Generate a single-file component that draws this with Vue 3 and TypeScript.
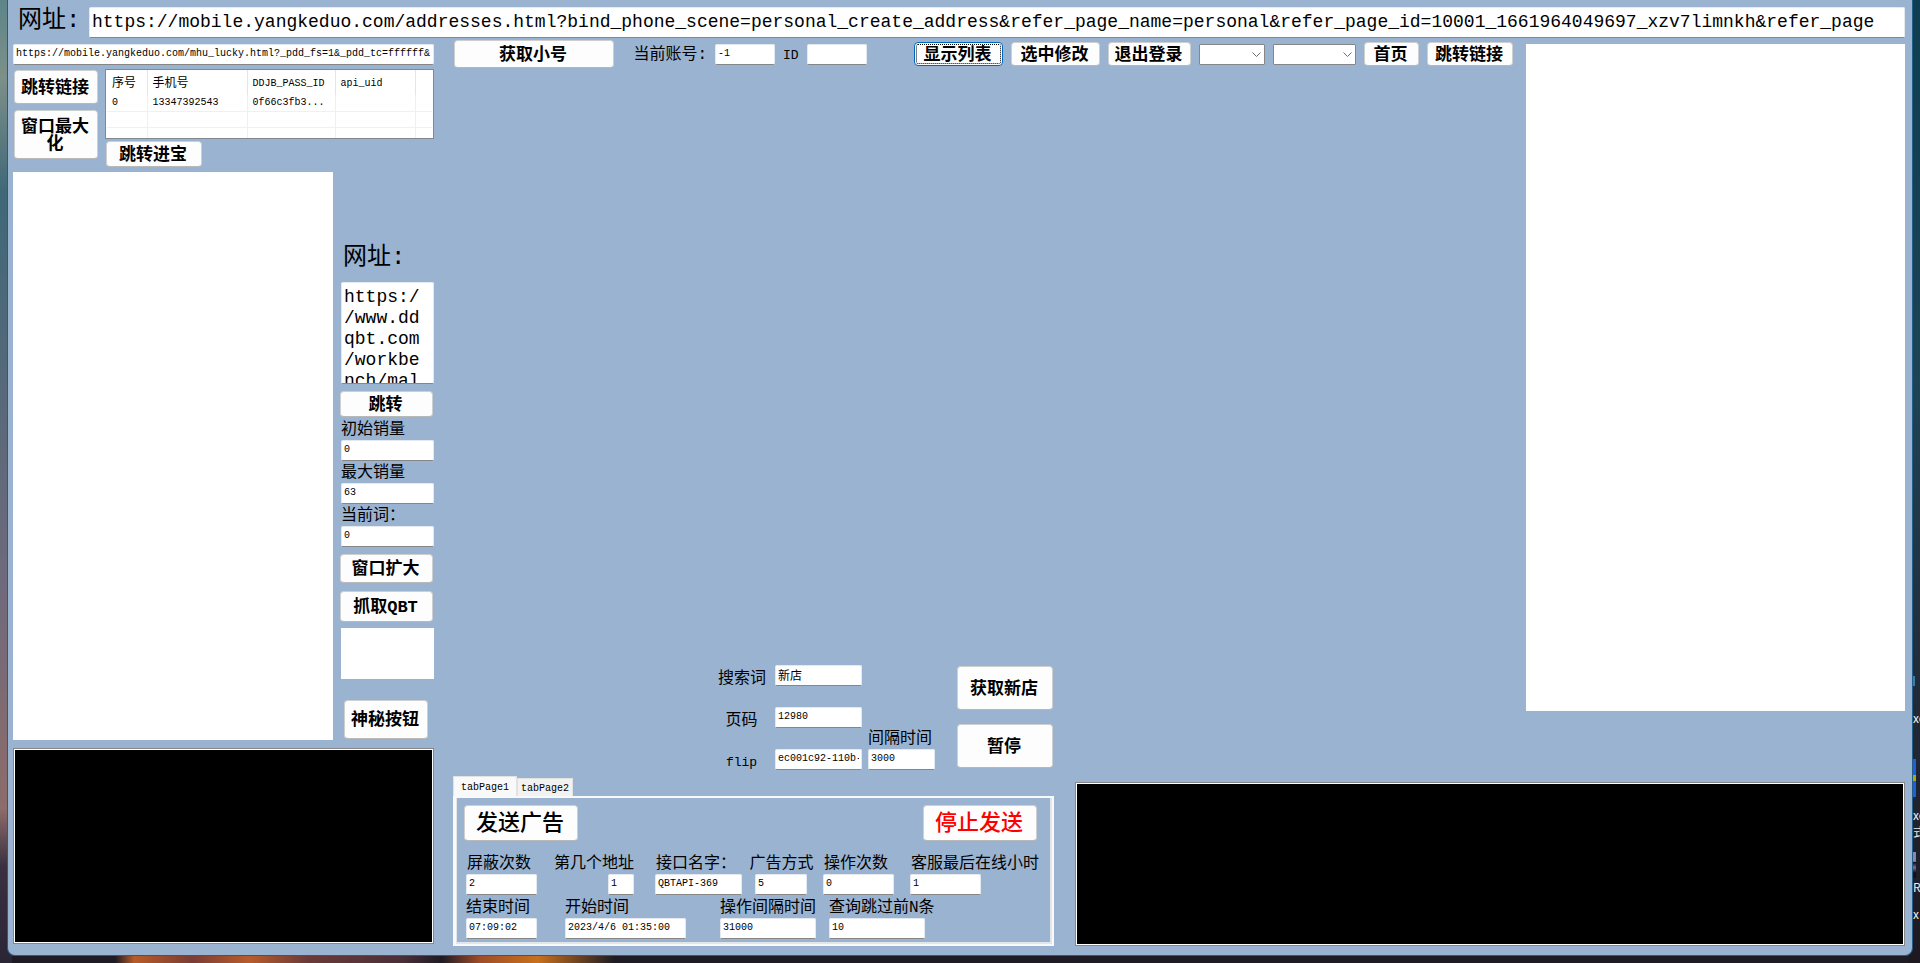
<script setup lang="ts">
import { ref } from 'vue'

interface Field {
  id: string
  label: string
  value: string
  size: string
}

const address = ref(
  'https://mobile.yangkeduo.com/addresses.html?bind_phone_scene=personal_create_address&refer_page_name=personal&refer_page_id=10001_1661964049697_xzv7limnkh&refer_page'
)
const luckyUrl = ref('https://mobile.yangkeduo.com/mhu_lucky.html?_pdd_fs=1&_pdd_tc=ffffff&')
const workbenchUrl = ref('https://www.ddqbt.com/workbench/mal')

const columns: string[] = ['序号', '手机号', 'DDJB_PASS_ID', 'api_uid', '']
const rows: string[][] = [
  ['0', '13347392543', '0f66c3fb3...', '', ''],
  ['', '', '', '', ''],
  ['', '', '', '', '']
]

const sales = ref<Field[]>([
  { id: 'sales-start', label: '初始销量', value: '0', size: 'full' },
  { id: 'sales-max', label: '最大销量', value: '63', size: 'full' },
  { id: 'current-word', label: '当前词：', value: '0', size: 'full' }
])

const search = ref<Field[]>([
  { id: 'search-word', label: '搜索词', value: '新店', size: 'cjk' },
  { id: 'page-number', label: '页码', value: '12980', size: '' },
  { id: 'flip', label: 'flip', value: 'ec001c92-110b-', size: '' }
])

const countFields = ref<Field[]>([
  { id: 'block-count', label: '屏蔽次数', value: '2', size: 'w-m' },
  { id: 'address-index', label: '第几个地址', value: '1', size: 'w-xs' },
  { id: 'api-name', label: '接口名字：', value: 'QBTAPI-369', size: 'w-l' },
  { id: 'ad-mode', label: '广告方式', value: '5', size: 'w-s' },
  { id: 'action-count', label: '操作次数', value: '0', size: 'w-m' },
  { id: 'online-hours', label: '客服最后在线小时', value: '1', size: 'w-m' }
])

const timeFields = ref<Field[]>([
  { id: 'end-time', label: '结束时间', value: '07:09:02', size: 'w-m' },
  { id: 'start-time', label: '开始时间', value: '2023/4/6 01:35:00', size: 'w-xxl' },
  { id: 'action-interval', label: '操作间隔时间', value: '31000', size: 'w-xl' },
  { id: 'skip-count', label: '查询跳过前N条', value: '10', size: 'w-xl' }
])

const activeTab = ref(1)
</script>

<template>
  <div class="desktop">
    <div class="shortcuts" aria-hidden="true">
      <span class="dot"></span>
      <span class="name first">xe</span>
      <span class="tile blue"><i></i></span>
      <span class="name">xe</span>
      <span class="name">式</span>
      <span class="tile violet"></span>
      <span class="name">R</span>
      <span class="name last">x</span>
    </div>

    <main class="window">
      <div class="address">
        <label class="big" for="address">网址:</label>
        <input id="address" v-model="address" class="box url" type="text" />
      </div>

      <div class="body">
        <section class="left">
          <input v-model="luckyUrl" class="box" type="text" aria-label="lucky" />
          <div class="accounts">
            <div class="jump">
              <button type="button" class="btn jump-link">跳转链接</button>
              <button type="button" class="btn maximize">窗口最大化</button>
            </div>
            <div class="list">
              <div class="grid-view">
                <table>
                  <colgroup>
                    <col class="c-index" />
                    <col class="c-phone" />
                    <col class="c-pass" />
                    <col class="c-uid" />
                    <col />
                  </colgroup>
                  <thead>
                    <tr>
                      <th v-for="(c, i) in columns" :key="i">{{ c }}</th>
                    </tr>
                  </thead>
                  <tbody>
                    <tr v-for="(r, i) in rows" :key="i">
                      <td v-for="(c, j) in r" :key="j">{{ c }}</td>
                    </tr>
                  </tbody>
                </table>
              </div>
              <button type="button" class="btn treasure">跳转进宝</button>
            </div>
          </div>

          <div class="workspace">
            <div class="blank"></div>
            <div class="side">
              <label class="big side-title" for="workbench">网址:</label>
              <textarea id="workbench" v-model="workbenchUrl" class="box memo"></textarea>
              <button type="button" class="btn go">跳转</button>
              <div v-for="f in sales" :key="f.id" class="sale">
                <label :for="f.id">{{ f.label }}</label>
                <input :id="f.id" v-model="f.value" class="box" type="text" />
              </div>
              <button type="button" class="btn expand">窗口扩大</button>
              <button type="button" class="btn grab">抓取QBT</button>
              <div class="preview"></div>
              <button type="button" class="btn mystery">神秘按钮</button>
            </div>
          </div>

          <div class="console console-left"></div>
        </section>

        <section class="right">
          <div class="upper">
            <div class="center">
              <div class="toolbar">
                <button type="button" class="btn fetch">获取小号</button>
                <div class="account">
                  <label for="account">当前账号:</label>
                  <input id="account" class="box" type="text" value="-1" />
                  <label for="account-id" class="latin">ID</label>
                  <input id="account-id" class="box" type="text" value="" />
                </div>
                <div class="actions">
                  <button type="button" class="btn tool focused">显示列表</button>
                  <button type="button" class="btn tool">选中修改</button>
                  <button type="button" class="btn tool narrow">退出登录</button>
                  <span class="combo combo-s">
                    <select aria-label="combo 1"><option></option></select>
                    <svg viewBox="0 0 9 6" width="9" height="6"><path d="M0.5 0.5 L4.5 4.5 L8.5 0.5" /></svg>
                  </span>
                  <span class="combo combo-l">
                    <select aria-label="combo 2"><option></option></select>
                    <svg viewBox="0 0 9 6" width="9" height="6"><path d="M0.5 0.5 L4.5 4.5 L8.5 0.5" /></svg>
                  </span>
                  <button type="button" class="btn tool home">首页</button>
                  <button type="button" class="btn tool link">跳转链接</button>
                </div>
              </div>

              <div class="search">
                <div class="search-fields">
                  <template v-for="f in search" :key="f.id">
                    <label :for="f.id" :class="{ latin: f.id === 'flip' }">{{ f.label }}</label>
                    <input :id="f.id" v-model="f.value" class="box" :class="f.size" type="text" />
                  </template>
                </div>
                <div class="interval">
                  <label for="interval">间隔时间</label>
                  <input id="interval" class="box" type="text" value="3000" />
                </div>
                <div class="shop">
                  <button type="button" class="btn tall">获取新店</button>
                  <button type="button" class="btn tall">暂停</button>
                </div>
              </div>
            </div>
            <div class="blank browser"></div>
          </div>

          <div class="lower">
            <div class="tabs">
              <div class="tab-strip" role="tablist">
                <button
                  v-for="n in 2"
                  :key="n"
                  type="button"
                  role="tab"
                  class="tab"
                  :class="{ active: activeTab === n }"
                  :aria-selected="activeTab === n"
                  @click="activeTab = n"
                >
                  tabPage{{ n }}
                </button>
              </div>
              <div class="pane">
                <div class="page">
                  <div class="send">
                    <button type="button" class="btn large">发送广告</button>
                    <button type="button" class="btn large stop">停止发送</button>
                  </div>
                  <div class="counts">
                    <div v-for="f in countFields" :key="f.id" class="field" :class="'f-' + f.size">
                      <label :for="f.id">{{ f.label }}</label>
                      <input :id="f.id" v-model="f.value" class="box" :class="f.size" type="text" />
                    </div>
                  </div>
                  <div class="times">
                    <div v-for="f in timeFields" :key="f.id" class="field">
                      <label :for="f.id">{{ f.label }}</label>
                      <input :id="f.id" v-model="f.value" class="box" :class="f.size" type="text" />
                    </div>
                  </div>
                </div>
              </div>
            </div>
            <div class="console console-right"></div>
          </div>
        </section>
      </div>
    </main>
  </div>
</template>

<style>
body {
  margin: 0;
}
</style>

<style scoped>
* {
  box-sizing: border-box;
}

.desktop {
  position: relative;
  display: flex;
  min-height: 100vh;
  padding: 0 7px 7px;
  overflow: hidden;
  font-family: 'Liberation Mono', 'Noto Sans CJK SC', monospace;
  font-size: 16px;
  line-height: 18px;
  color: #000;
  background:
    linear-gradient(90deg, transparent 6%, #b85c28 7%, #7a3c34 10%, #b85c2c 13%, #6b3a38 16%, #4a2e38 21%, transparent 23%, #a04c28 25%, #c8701c 28%, transparent 32%) bottom / 100% 7px no-repeat,
    linear-gradient(180deg, #5d8589 0, #7d9089 8%, #3f6878 20%, #6e6a7c 60%, #8d6c6a 84%, #3a3040 90%, #2a2636 100%) left / 12px 100% no-repeat,
    linear-gradient(180deg, #0e3e52 0, #1e4356 40%, #222c3a 70%, #1e1820 100%) right / 12px 100% no-repeat,
    #1e1b24;
}

.shortcuts {
  position: absolute;
  top: 676px;
  right: 0;
  display: flex;
  flex-direction: column;
  width: 7px;
  overflow: hidden;
  font-family: 'Noto Sans CJK SC', sans-serif;
  font-size: 12px;
  line-height: 17px;
  color: #eef0f2;
}

.dot {
  width: 2px;
  height: 10px;
  background: #3c7ea4;
}

.name {
  height: 17px;
  white-space: nowrap;
}

.first {
  margin: 23px 0 33px;
}

.last {
  margin-top: 10px;
}

.tile {
  width: 3px;
}

.blue {
  display: flex;
  align-items: center;
  height: 38px;
  margin-bottom: 9px;
  background: #1f5fd8;
}

.blue i {
  width: 3px;
  height: 6px;
  background: #a8a820;
}

.violet {
  height: 26px;
  margin-top: 12px;
  background: linear-gradient(#8585b8 36%, #101018 40%, #7070a0 60%, #101018 80%);
}

.window {
  position: relative;
  display: flex;
  flex: 1;
  flex-direction: column;
  min-width: 0;
  background: #99b3d1;
  border: 1px solid #235e88;
  border-top: 0;
  border-radius: 0 0 8px 8px;
}

.box {
  display: block;
  width: 100%;
  height: 21px;
  padding: 0 2px 2px;
  margin: 0;
  font-family: 'Liberation Mono', 'Noto Sans CJK SC', monospace;
  font-size: 10px;
  color: #000;
  background: #fff;
  border: 1px solid #e4e9f0;
  border-bottom-color: #868686;
  border-radius: 2px;
  outline: 0;
}

.cjk {
  font-size: 12px;
}

.btn {
  padding: 2px 2px 0 0;
  margin: 0;
  font-family: 'Liberation Mono', 'Noto Sans CJK SC', monospace;
  font-size: 17px;
  font-weight: 700;
  line-height: 17px;
  color: #000;
  background: #fdfdfd;
  border: 1px solid #cfcfcf;
  border-bottom-color: #b8b8b8;
  border-radius: 4px;
}

label {
  height: 18px;
  line-height: 21px;
  white-space: nowrap;
}

.big {
  height: auto;
  font-size: 24px;
  line-height: 28px;
}

.latin {
  font-size: 13px;
}

.address {
  display: flex;
  padding: 7px 7px 0 10px;
}

.address .big {
  width: 71px;
}

.address .url {
  flex: 1;
  height: 31px;
  padding-bottom: 2px;
  font-size: 18px;
}

.body {
  display: grid;
  flex: 1;
  grid-template-columns: 421px minmax(0, 1fr);
  column-gap: 19px;
  padding: 0 7px 9px 5px;
}

.left {
  display: flex;
  flex-direction: column;
  padding-top: 6px;
}

.accounts {
  display: flex;
  gap: 7px;
  margin-top: 4px;
}

.jump {
  display: flex;
  flex-direction: column;
  gap: 6px;
  width: 85px;
  padding: 1px 0 0 1px;
}

.jump-link {
  height: 34px;
}

.maximize {
  height: 49px;
  padding: 2px 6px 0 4px;
}

.list {
  flex: 1;
  min-width: 0;
}

.grid-view {
  height: 70px;
  padding: 0 1px;
  overflow: hidden;
  background: #fff;
  border: 1px solid #828790;
}

table {
  width: 100%;
  font-size: 10px;
  line-height: 14px;
  table-layout: fixed;
  border-spacing: 0;
  border-collapse: collapse;
}

.c-index {
  width: 40px;
}

.c-phone {
  width: 100px;
}

.c-pass {
  width: 88px;
}

.c-uid {
  width: 80px;
}

th {
  height: 25px;
  padding: 3px 0 0 5px;
  font-size: 12px;
  font-weight: 400;
  text-align: left;
  border-right: 1px solid #e5e5e5;
}

th:nth-child(n + 3) {
  font-size: 10px;
}

td {
  height: 16px;
  padding: 1px 0 0 5px;
  border-right: 1px solid #f0f0f0;
  border-bottom: 1px solid #f0f0f0;
}

th:last-child,
td:last-child {
  border-right: 0;
}

.treasure {
  display: block;
  width: 96px;
  height: 26px;
  margin: 2px 0 0 1px;
}

.workspace {
  display: flex;
  flex: 1;
  gap: 7px;
  margin-top: 5px;
}

.blank {
  background: #fff;
}

.workspace .blank {
  flex: 1;
}

.side {
  display: flex;
  flex-direction: column;
  width: 94px;
}

.side .btn {
  margin-right: 1px;
}

.side-title {
  padding: 72px 0 0 3px;
}

.side .memo {
  width: 93px;
  height: 102px;
  padding: 4px 10px 0 2px;
  margin: 10px 0 0 1px;
  overflow: hidden;
  font-size: 18px;
  line-height: 21px;
  line-break: anywhere;
  resize: none;
}

.side .go {
  height: 26px;
  margin: 7px 1px 3px 0;
}

.sale {
  display: flex;
  flex-direction: column;
  gap: 2px;
  padding-left: 1px;
  margin-bottom: 2px;
}

.expand {
  height: 29px;
  margin-top: 5px;
}

.grab {
  height: 31px;
  margin-top: 8px;
}

.preview {
  height: 51px;
  margin: 6px 0 0 1px;
  background: #fff;
}

.mystery {
  width: 84px;
  height: 39px;
  margin: 21px 0 0 4px;
}

.console {
  background: #000;
  border: 1px solid #868686;
  outline: 1px solid #fff;
  outline-offset: -2px;
}

.console-left {
  height: 196px;
  margin: 8px 0 2px;
}

.right {
  display: flex;
  flex-direction: column;
}

.upper {
  display: flex;
  flex: 1;
  gap: 13px;
}

.center {
  display: flex;
  flex: 1;
  flex-direction: column;
  justify-content: space-between;
  min-width: 0;
}

.browser {
  flex: 0 0 379px;
  margin: 6px 0 65px;
}

.toolbar {
  display: flex;
  align-items: center;
  justify-content: space-between;
  padding: 2px 0 0 1px;
}

.fetch {
  width: 160px;
  height: 28px;
}

.account {
  display: flex;
  gap: 8px;
  align-items: center;
  margin: 0 28px 0 0;
}

.account .box {
  width: 60px;
}

.actions {
  display: flex;
  gap: 8px;
  align-items: center;
}

.tool {
  width: 89px;
  height: 24px;
}

.tool.narrow {
  width: 83px;
}

.tool.home {
  width: 55px;
}

.tool.link {
  width: 86px;
}

.focused {
  border-color: #0067c0;
  outline: 1px dotted #000;
  outline-offset: -3px;
}

.combo {
  position: relative;
}

.combo-s {
  width: 66px;
}

.combo-l {
  width: 83px;
}

.combo select {
  display: block;
  width: 100%;
  height: 21px;
  appearance: none;
  background: #fff;
  border: 1px solid #868686;
  border-radius: 1px;
}

.combo svg {
  position: absolute;
  top: 8px;
  right: 4px;
  pointer-events: none;
}

.combo path {
  fill: none;
  stroke: #6a6a6a;
}

.search {
  display: flex;
  align-items: flex-end;
  padding: 0 0 6px 265px;
}

.search-fields {
  display: grid;
  grid-template-columns: 47px 87px;
  gap: 21px 10px;
  margin-right: 6px;
}

.search-fields label {
  align-self: end;
  line-height: 22px;
  text-align: center;
}

.interval {
  display: flex;
  flex-direction: column;
  gap: 2px;
  width: 67px;
  margin-right: 22px;
}

.shop {
  display: flex;
  flex-direction: column;
  gap: 14px;
  padding-bottom: 2px;
}

.tall {
  width: 96px;
  height: 44px;
}

.lower {
  display: flex;
  gap: 21px;
  align-items: flex-end;
}

.tabs {
  flex: 0 0 601px;
}

.tab-strip {
  display: flex;
  align-items: flex-end;
}

.tab {
  width: 56px;
  height: 18px;
  padding: 1px 0 0;
  margin: 0;
  font-family: 'Liberation Mono', monospace;
  font-size: 10px;
  color: #000;
  background: #f2f2f2;
  border: 1px solid #e2e2e2;
  border-bottom: 0;
}

.tab.active {
  width: 64px;
  height: 20px;
  background: #f9f9f9;
}

.pane {
  background: #99b3d1;
  border: 1px solid #f9f9f9;
  border-width: 2px 2px 2px 3px;
}

.page {
  padding: 7px 12px 3px 9px;
  border: 1px solid #e2e6ea;
  border-width: 0 2px 2px 1px;
}

.send {
  display: flex;
  justify-content: space-between;
  padding-right: 1px;
  margin-left: -2px;
}

.large {
  width: 114px;
  height: 36px;
  padding-top: 3px;
  font-size: 22px;
  font-weight: 500;
}

.stop {
  color: #f00;
}

.counts,
.times {
  display: grid;
}

.counts {
  grid-template-columns: 90px 99px 94px 74px 87px minmax(0, 1fr);
  margin-top: 13px;
}

.counts label {
  padding-left: 1px;
}

.times {
  grid-template-columns: 99px 155px 109px minmax(0, 1fr);
  margin-top: 3px;
}

.field {
  display: flex;
  flex-direction: column;
  gap: 2px;
  align-items: flex-start;
}

.f-w-xs {
  align-items: flex-end;
  width: 78px;
}

.f-w-s {
  align-items: center;
  width: 64px;
}

.w-xs {
  width: 26px;
}

.w-s {
  width: 52px;
}

.w-m {
  width: 71px;
}

.w-l {
  width: 87px;
}

.w-xl {
  width: 96px;
}

.w-xxl {
  width: 121px;
}

.console-right {
  flex: 1;
  height: 164px;
}
</style>
